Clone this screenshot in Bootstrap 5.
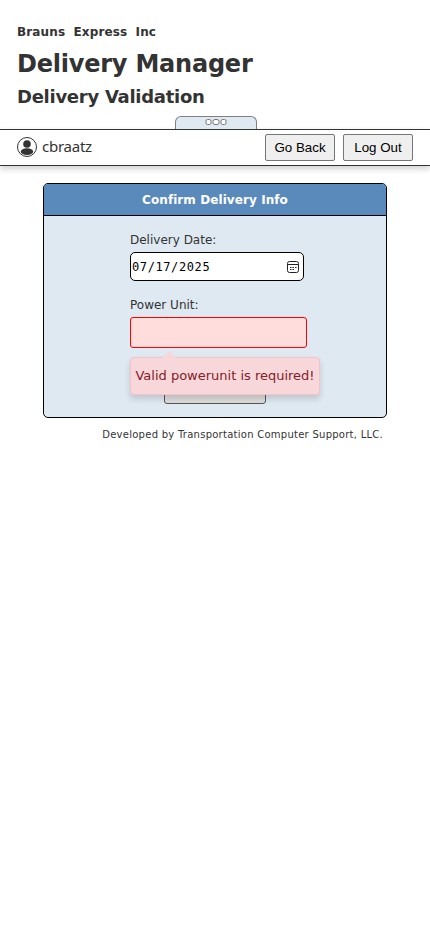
<!DOCTYPE html>
<html lang="en">
<head>
<meta charset="utf-8">
<meta name="viewport" content="width=device-width, initial-scale=1">
<title>Delivery Manager</title>
<link href="https://cdn.jsdelivr.net/npm/bootstrap@5.3.0/dist/css/bootstrap.min.css" rel="stylesheet">
<style>
body{font-family:"DejaVu Sans",Verdana,sans-serif;color:#333;background:#fff;font-size:12px}
.brand-head{height:129px;padding:23px 17px 0}
.company{font-size:12px;line-height:18px;word-spacing:4px;letter-spacing:.13px}
.page-title{font-size:24px;line-height:32px;margin-top:7px;letter-spacing:-.22px}
.page-sub{font-size:18px;line-height:24px;margin-top:5px;letter-spacing:-.27px}
.drawer-tab{left:175px;top:116px;width:82px;height:13px;background:#dfe9f2;border:1px solid #808080;border-bottom:0;border-radius:6px 6px 0 0}
.tab-dots{margin-top:-1px}
.user-bar{height:37px;border-top:1px solid #333;border-bottom:1px solid #333;padding:0 17px;box-shadow:0 3px 6px rgba(0,0,0,.18);background:#fff}
.user-icon{margin-top:-2px}
.user-name{font:15px/20px "Noto Sans",sans-serif;margin:-4px 0 0 5px;letter-spacing:-.25px}
.bar-btn{width:70px;height:27px;padding:0 0 1px;font:13.333px/23px "Liberation Sans",Arial,sans-serif;background:#efefef;border:1px solid #767676;border-radius:2px;color:#000}
.confirm-box{width:344px;height:235px;margin:17px 0 0 43px;border:1px solid #000;border-radius:5px;background:#dfe9f2}
.confirm-head{height:32px;background:#5a8abc;border-bottom:1px solid #000;border-radius:4px 4px 0 0;font-size:12px;letter-spacing:.08px}
.confirm-form{padding:15px 0 0 86px}
.field-label{font-size:12px;line-height:18px}
.unit-label{margin-top:15px}
.date-field{width:174px;height:29px;margin-top:3px;padding:0 3px 0 1px;border:1px solid #000;border-radius:5px;background:#fff;color:#000;font:12px/20px "DejaVu Sans Mono",monospace;letter-spacing:.6px}
.unit-field{width:177px;height:31px;margin-top:3px;border:1px solid red;border-radius:3px;background:#fdd}
.error-tip{left:-1px;top:39px;width:190px;height:38px;border:1px solid #f5c2c7;border-radius:4px;background:#f8d7da;color:#842029;font-size:13px;box-shadow:0 4px 6px rgba(0,0,0,.15);white-space:nowrap}
.tip-arrow{left:30px;top:-7px}
.submit-btn{width:102px;height:30px;margin:26px 0 0 34px;background:#ddd;border:1px solid #555;border-radius:3px}
.credit{font-size:10px;line-height:14px;margin:10px 47px 0 0;letter-spacing:.26px}
</style>
</head>
<body>
<header class="brand-head position-relative">
<div class="company fw-bold">Brauns Express Inc</div>
<h1 class="page-title fw-bold mb-0">Delivery Manager</h1>
<h2 class="page-sub fw-bold mb-0">Delivery Validation</h2>
<div class="drawer-tab position-absolute d-flex justify-content-center">
<svg class="tab-dots" width="22" height="12" fill="#fff" stroke="#777"><rect x="1" y="3.5" width="5" height="5" rx="1.5"/><rect x="8" y="3.5" width="6" height="5" rx="2"/><rect x="16" y="3.5" width="5" height="5" rx="1.5"/></svg>
</div>
</header>
<nav class="user-bar d-flex align-items-center">
<svg class="user-icon" width="20" height="20" viewBox="0 0 20 20"><circle cx="10" cy="10" r="9.5" fill="#fff" stroke="#333"/><circle cx="10" cy="7" r="3.8" fill="#333"/><ellipse cx="10" cy="14.7" rx="6.2" ry="3.4" fill="#333"/></svg>
<span class="user-name">cbraatz</span>
<div class="d-flex gap-2 ms-auto"><button class="bar-btn">Go Back</button><button class="bar-btn">Log Out</button></div>
</nav>
<main>
<section class="confirm-box">
<div class="confirm-head d-flex align-items-center justify-content-center text-white fw-bold">Confirm Delivery Info</div>
<form class="confirm-form">
<div class="field-label">Delivery Date:</div>
<div class="date-field d-flex align-items-center justify-content-between"><span>07/17/2025</span>
<svg width="13" height="12" fill="none" stroke="#222"><rect x=".5" y=".5" width="11" height="11" rx="2"/><path d="M1 3.5h10"/><path d="M3 6.5h1.5m1 0H7m1 0h1.5M3 8.5h1.5m1 0H7"/></svg></div>
<div class="field-label unit-label">Power Unit:</div>
<div class="unit-field position-relative">
<div class="error-tip position-absolute z-1 d-flex align-items-center justify-content-center"><svg class="tip-arrow position-absolute" width="16" height="8" fill="#f8d7da"><path d="M0 8 8 0l8 8z"/></svg><span>Valid powerunit is required!</span></div>
</div>
<div class="submit-btn"></div>
</form>
</section>
<footer class="credit text-end">Developed by Transportation Computer Support, LLC.</footer>
</main>
<script src="https://cdn.jsdelivr.net/npm/bootstrap@5.3.0/dist/js/bootstrap.bundle.min.js"></script>
</body>
</html>
